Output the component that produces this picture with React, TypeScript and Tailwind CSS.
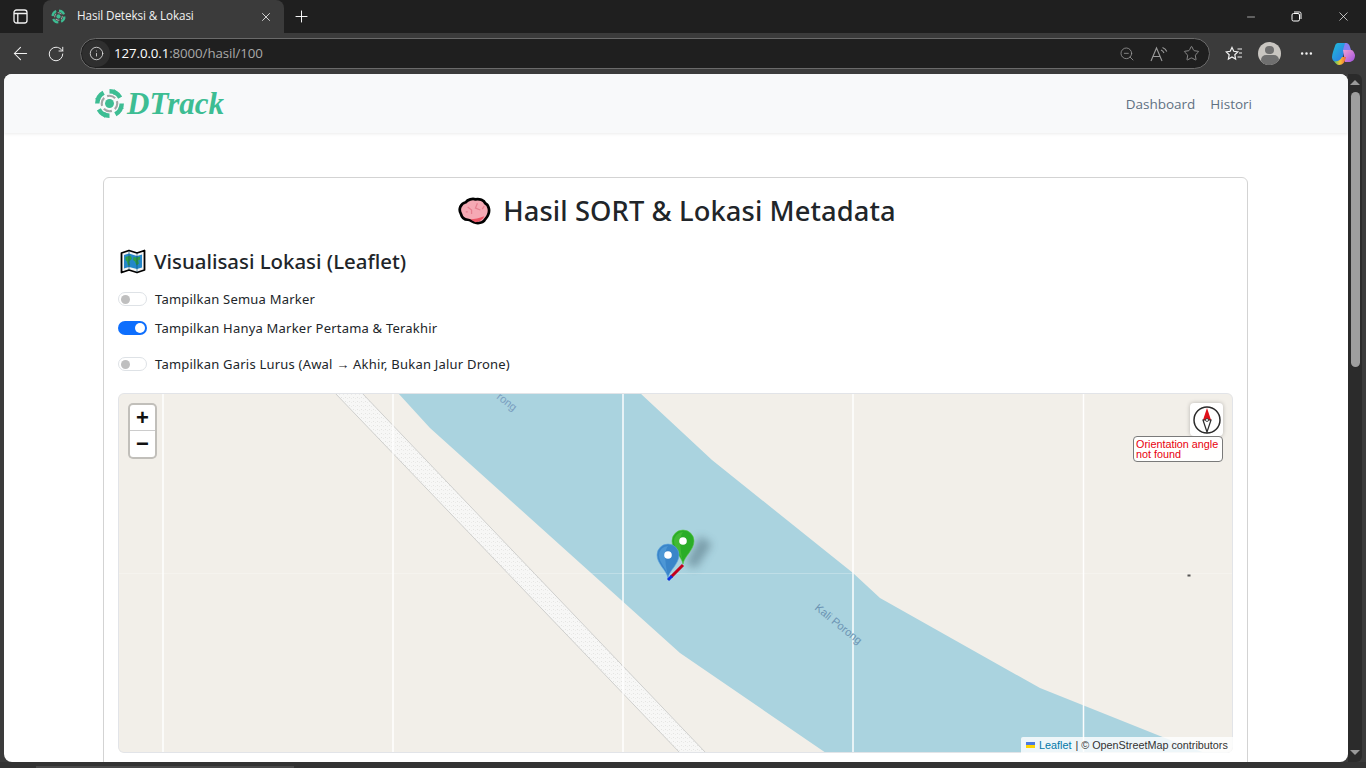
import { ArrowLeft, Info, Minus, MoreHorizontal, Plus, RotateCw, Star, X, ZoomOut } from 'lucide-react'

const LogoMark = ({ size }: { size: number }) => (
  <svg width={size} height={size} viewBox="0 0 32 32" fill="none">
    <circle cx="16" cy="16" r="4.6" fill="#3dbd93" />
    <circle cx="16" cy="16" r="8" stroke="#a3a6a5" strokeWidth="2.2" pathLength={100} strokeDasharray="18 7" strokeDashoffset="5" />
    <circle cx="16" cy="16" r="12.6" stroke="#3dbd93" strokeWidth="4.6" pathLength={100} strokeDasharray="17 8" />
    <path d="M1 11l6-3-1 6zM21 1l5 6-6 0zM31 21l-6 3 1-6zM11 31l-5-6 6 0z" fill="#3dbd93" />
  </svg>
)

const BrainEmoji = () => (
  <svg width="33" height="28" viewBox="0 0 34 28">
    <path d="M3 17C0 12 3 6 8 5c2-3 7-4 10-3 4-1 9 1 10 4 4 2 5 8 3 12-1 3-3 4-4 6-2 2-6 3-9 2-3 0-5-3-8-3-3 0-6-2-7-6z" fill="#f5a9b4" stroke="#000" strokeWidth="2.800" strokeLinejoin="round" />
    <path d="M18 25.500c-2-1-4-2-5-3 4 0 9-1 14-3-1 3-5 6-9 6z" fill="#ea5565" />
    <path d="M10 10l4 3 0 4M20 6l-2 5 5 2M25 12l2-3M8 15l2 0" fill="none" stroke="#e67f8f" strokeWidth="1.300" />
  </svg>
)

const MapEmoji = () => (
  <svg width="26" height="25" viewBox="0 0 26 25">
    <path d="M1.500 4L9 1.500 17 4 24.500 1.500V21L17 23.500 9 21 1.500 23.500z" fill="#f4f4f4" stroke="#000" strokeWidth="1.800" strokeLinejoin="round" />
    <path d="M4 6L9 4.500 17 7 22 5.500V18.500L17 20 9 18 4 19.500z" fill="#2587c9" />
    <path d="M5.500 8l5-1.500 1.500 3-3 3.500 1 3-2 .5-1-4-1.500-1.500zM13.500 8l3 .5 3.500-1v3l-2 1 1 3-2.500 2-1.500-4-2-1.500z" fill="#2f9f47" />
    <path d="M9 2v19M17 4v19" stroke="#0b4a6b" strokeWidth=".6" />
  </svg>
)

const Toggle = ({ on, label, className }: { on?: boolean; label: string; className: string }) => (
  <div className={`flex items-center gap-[8px] ${className}`}>
    {on ? (
      <span className="w-[29px] h-[14px] rounded-full bg-[#0d6efd] flex items-center justify-end pr-[2px]">
        <span className="w-[10px] h-[10px] rounded-full bg-white" />
      </span>
    ) : (
      <span className="w-[29px] h-[14px] rounded-full bg-white border border-[#dee2e6] flex items-center pl-[2px]">
        <span className="w-[9px] h-[9px] rounded-full bg-[#bfbfbf]" />
      </span>
    )}
    <span className="text-[13px] leading-[20px] tracking-[0.21px] text-[#212529]">{label}</span>
  </div>
)

const Pin = ({ x, y, top, bottom }: { x: number; y: number; top: string; bottom: string }) => (
  <g transform={`translate(${x} ${y})`}>
    <path d="M0 0C-1.500-8-11-14-11-23a11 11 0 0 1 22 0C11-14 1.500-8 0 0z" fill={bottom} stroke={top} strokeWidth=".6" />
    <path d="M0-2C-1-9-9-15-9-23a9 9 0 0 1 9-9c-3 3-4 14 0 30z" fill={top} opacity=".55" />
    <circle cx="0" cy="-23" r="3.800" fill="#fff" />
  </g>
)

const MapDrawing = () => (
  <svg className="absolute inset-0" width="1115" height="360" viewBox="118 393 1115 360">
    <defs>
      <filter id="soft" x="-60%" y="-60%" width="220%" height="220%">
        <feGaussianBlur stdDeviation="4" />
      </filter>
      <pattern id="dots" width="4" height="4" patternUnits="userSpaceOnUse">
        <rect width="4" height="4" fill="#f7f7f6" />
        <rect x="1" y="1" width="1" height="1" fill="#e4e4e2" />
        <rect x="3" y="2" width="1" height="1" fill="#ebebe9" />
      </pattern>
    </defs>
    <rect x="118" y="393" width="1115" height="360" fill="#f2efe9" />
    <path d="M398 393L430 428 680 653 826 753H1205L1165 738 1040 688 880 598 853 573 712 460 640 393z" fill="#aad3df" />
    <path d="M335 393H362L706 753H680z" fill="url(#dots)" />
    <path d="M335 393L680 753M362 393L706 753" stroke="#cfcfcd" strokeWidth="1" fill="none" />
    <path d="M163 393V753M393 393V753M623 393V753M853 393V753M1083.500 393V753" stroke="#fff" strokeWidth="1.500" opacity=".95" />
    <path d="M118 573.500H1233" stroke="#fff" strokeWidth="1" opacity=".25" />
    <text x="496" y="398" transform="rotate(38 496 398)" fontSize="11" fill="#7b9fc0" fontFamily="Liberation Sans, sans-serif">rong</text>
    <text x="814" y="609" transform="rotate(39 814 609)" fontSize="11" fill="#6d95b4" fontFamily="Liberation Sans, sans-serif">Kali Porong</text>
    <rect x="1187.500" y="574.500" width="3" height="2" fill="#555" />
    <path d="M686 564L700 536 712 544 696 568z" fill="#2c4452" opacity=".38" filter="url(#soft)" />
    <path d="M683 565L671 577" stroke="#c4001c" strokeWidth="3" />
    <Pin x={683} y={564} top="#56c442" bottom="#2aad27" />
    <Pin x={668} y={578} top="#5da5df" bottom="#3a85c9" />
    <path d="M672 576L668 580" stroke="#0a2fe0" strokeWidth="3" />
  </svg>
)

export default function App() {
  return (
    <div className="w-[1366px] h-[768px] overflow-hidden flex flex-col bg-[#3b3b3b] font-['Noto_Sans','Open_Sans',sans-serif]">
      {/* tab strip */}
      <div className="h-[33px] bg-[#1f1f1f] flex items-end text-white shrink-0">
        <div className="w-[43px] h-[33px] flex items-center pl-[13px]">
          <svg width="15" height="15" viewBox="0 0 15 15" fill="none" stroke="#f2f2f2" strokeWidth="1.300">
            <rect x="1" y="1" width="13" height="13" rx="2.500" />
            <path d="M1 4.500h13M4.800 4.500V14" />
          </svg>
        </div>
        <div className="w-[241px] h-[33px] bg-[#3b3b3b] rounded-t-[8px] flex items-center pl-[8px] pr-[11px] gap-[11px]">
          <LogoMark size={15} />
          <span className="flex-1 text-[11.700px] tracking-[-0.1px] font-['Open_Sans',sans-serif] text-[#f0f0f0] -mt-[1px]">Hasil Deteksi &amp; Lokasi</span>
          <X size={14} strokeWidth={1.500} className="text-[#e8e8e8]" />
        </div>
        <div className="w-[35px] h-[33px] flex items-center justify-center">
          <Plus size={19} strokeWidth={1.200} />
        </div>
        <div className="flex-1" />
        <div className="h-[33px] flex items-center pr-[15px] gap-[34px]">
          <Minus size={12} strokeWidth={1.200} />
          <svg width="11" height="11" viewBox="0 0 11 11" fill="none" stroke="#fff" strokeWidth="1">
            <rect x="1" y="2.500" width="7.500" height="7.500" rx="1.500" />
            <path d="M3 1h5.500a1.500 1.500 0 0 1 1.500 1.500V8" />
          </svg>
          <X size={15} strokeWidth={1.100} />
        </div>
      </div>

      {/* toolbar */}
      <div className="h-[41px] flex items-center shrink-0 text-[#f2f2f2]">
        <div className="w-[40px] flex justify-center">
          <ArrowLeft size={21} strokeWidth={1.200} />
        </div>
        <div className="w-[40px] flex justify-center -ml-[4px]">
          <RotateCw size={18} strokeWidth={1.300} />
        </div>
        <div className="w-[1130px] h-[31px] ml-[4px] rounded-full bg-[#1f1f1f] border border-[#6a6a6a] flex items-center pl-[1px] pr-[9px]">
          <span className="w-[28px] h-[27px] rounded-full bg-[#2f2f2f] flex items-center justify-center">
            <Info size={15} strokeWidth={1.300} className="text-[#e5e5e5]" />
          </span>
          <span className="ml-[4px] mt-[1px] flex-1 text-[13.300px] tracking-[-0.1px] font-['Open_Sans',sans-serif] text-[#a9a9a9]">
            <span className="text-white">127.0.0.1</span>:8000/hasil/100
          </span>
          <div className="flex items-center gap-[15px] text-[#9a9a9a]">
            <ZoomOut size={16} strokeWidth={1.200} />
            <svg width="18" height="16" viewBox="0 0 18 16" fill="none" stroke="#9a9a9a" strokeWidth="1.100">
              <path d="M1 15L6.500 2 12 15M3 10.500h7M11 4c1.500.5 2.300 1.300 3 3M12.500 1.500c2 .7 3.500 2 4.300 4" />
            </svg>
            <Star size={17} strokeWidth={1.200} />
          </div>
        </div>
        <div className="flex items-center">
          <svg className="ml-[15px]" width="18" height="16" viewBox="0 0 18 16" fill="none" stroke="#f2f2f2" strokeWidth="1.200">
            <path d="M7 1.500l1.800 3.800 4 .6-3 2.800.8 4.300L7 11l-3.600 2 .8-4.300-3-2.800 4-.6zM12.500 3H17M14 7h3M12.500 11H17" />
          </svg>
          <span className="ml-[15px] w-[23px] h-[23px] rounded-full bg-[#c9c6c1] overflow-hidden flex flex-col items-center">
            <span className="mt-[4px] w-[9px] h-[9px] rounded-full bg-[#6f6f6f]" />
            <span className="mt-[1px] w-[18px] h-[12px] rounded-full bg-[#6f6f6f]" />
          </span>
          <MoreHorizontal size={15} strokeWidth={2} className="ml-[18px]" />
          <svg className="ml-[17px]" width="24" height="24" viewBox="0 0 24 24">
            <defs>
              <linearGradient id="cpA" x1="0" y1="0" x2="1" y2="1">
                <stop offset="0" stopColor="#1fc0d8" />
                <stop offset="1" stopColor="#2f6be8" />
              </linearGradient>
              <linearGradient id="cpB" x1="0" y1="0" x2="1" y2="1">
                <stop offset="0" stopColor="#f2a0d0" />
                <stop offset="1" stopColor="#a04fe0" />
              </linearGradient>
              <linearGradient id="cpC" x1="0" y1="0" x2="1" y2="0">
                <stop offset="0" stopColor="#45c46c" />
                <stop offset=".5" stopColor="#f5c533" />
                <stop offset="1" stopColor="#f0603c" />
              </linearGradient>
            </defs>
            <path d="M8 1h8l-4 13c-1 4-3 6-6 6-3 0-5-2-5-5 0-3 2-8 3-11s2-3 4-3z" fill="url(#cpA)" />
            <path d="M12 8h8c2 0 3 2 4 5 0 5-3 7-6 7h-4z" fill="url(#cpB)" />
            <path d="M3 19c3 1 6 0 8-4h4c-1 5-3 8-7 8-2 0-4-2-5-4z" fill="url(#cpC)" />
            <path d="M14 1h1c2 0 3 1 4 4l1 3h-8z" fill="#8a7cf0" />
          </svg>
        </div>
      </div>

      {/* page + scrollbar */}
      <div className="h-[688px] flex pl-[4px] shrink-0">
        <div className="w-[1344px] h-[688px] bg-white rounded-t-[8px] rounded-b-[8px] overflow-hidden">
          <nav className="h-[59px] bg-[#f8f9fa] shadow-[0_1px_3px_rgba(0,0,0,0.08)] flex items-center pl-[90px] pr-[96px]">
            <LogoMark size={31} />
            <span className="ml-[2px] mt-[2px] font-['Liberation_Serif',serif] font-bold italic text-[31px] text-[#3dbd93]">DTrack</span>
            <div className="flex-1" />
            <div className="flex gap-[15px] mt-[1px] text-[13.500px] text-[#5f7182] font-['Open_Sans',sans-serif]">
              <span>Dashboard</span>
              <span>Histori</span>
            </div>
          </nav>
          <div className="mt-[44px] mx-[99px] w-[1145px] h-[640px] border border-[#d3d3d3] rounded-[6px] px-[14px]">
            <div className="h-[66px] flex items-center justify-center gap-[12px] pl-[3px]">
              <BrainEmoji />
              <h1 className="text-[27.300px] font-medium text-[#212529] tracking-[0.1px]">Hasil SORT &amp; Lokasi Metadata</h1>
            </div>
            <div className="h-[34px] flex items-center gap-[8px] pl-[2px]">
              <MapEmoji />
              <h2 className="text-[20.400px] font-medium text-[#212529]">Visualisasi Lokasi (Leaflet)</h2>
            </div>
            <Toggle label="Tampilkan Semua Marker" className="mt-[11px]" />
            <Toggle on label="Tampilkan Hanya Marker Pertama & Terakhir" className="mt-[9px]" />
            <Toggle label="Tampilkan Garis Lurus (Awal → Akhir, Bukan Jalur Drone)" className="mt-[16px]" />
            <div className="relative mt-[19px] w-[1115px] h-[360px] rounded-[6px] overflow-hidden">
              <MapDrawing />
              <div className="absolute inset-0 rounded-[6px] border border-[#e2e4e8]" />
              <div className="absolute left-[10px] top-[10px] w-[29px] h-[56px] bg-white bg-clip-padding rounded-[5px] border-2 border-black/20 flex flex-col font-['Liberation_Sans',sans-serif] font-bold text-[#111] text-[22px] leading-[26px] text-center">
                <span className="h-[26px] border-b border-[#ccc]">+</span>
                <span className="h-[26px]">−</span>
              </div>
              <div className="absolute right-[10px] top-[10px] w-[33px] h-[33px] bg-white rounded-[4px] shadow-[0_0_4px_rgba(0,0,0,0.25)] flex items-center justify-center">
                <svg width="30" height="30" viewBox="0 0 30 30">
                  <circle cx="15" cy="15" r="13" fill="#fff" stroke="#2b2b2b" strokeWidth="1.500" />
                  <path d="M15 3l4 12h-8z" fill="#e0101a" />
                  <path d="M15 27l4-12h-8z" fill="#fff" stroke="#2b2b2b" strokeWidth="1.200" />
                  <circle cx="15" cy="15" r="1.500" fill="#fff" stroke="#2b2b2b" strokeWidth=".8" />
                </svg>
              </div>
              <div className="absolute left-[1015px] top-[43px] w-[90px] h-[26px] bg-white/95 rounded-[4px] border border-[#7a7a7a] pl-[2px] pt-[2px] font-['Liberation_Sans',sans-serif] text-[10.800px] leading-[10px] text-[#e8000d]">
                Orientation angle not found
              </div>
              <div className="absolute right-0 bottom-0 h-[16px] w-[212px] bg-white/80 rounded-tl-[2px] pl-[5px] flex items-center gap-[4px] font-['Liberation_Sans',sans-serif] text-[10.800px] text-[#333]">
                <span className="w-[9px] h-[6px] flex flex-col">
                  <span className="h-[3px] bg-[#4c7be1]" />
                  <span className="h-[3px] bg-[#ffd500]" />
                </span>
                <span className="text-[#0078a8]">Leaflet</span>
                <span>| © OpenStreetMap contributors</span>
              </div>
            </div>
          </div>
        </div>
        {/* scrollbar */}
        <div className="w-[14px] h-[688px] flex flex-col items-center bg-[#2b2b2b] rounded-r-[6px]">
          <span className="mt-[6px] w-0 h-0 border-x-[5px] border-x-transparent border-b-[5px] border-b-[#9a9a9a]" />
          <span className="mt-[7px] w-[9px] h-[275px] rounded-full bg-[#9e9e9e]" />
          <span className="mt-[383px] w-0 h-0 border-x-[5px] border-x-transparent border-t-[5px] border-t-[#9a9a9a]" />
        </div>
      </div>

      {/* strip under the window */}
      <div className="h-[6px] bg-[#333333] flex items-end shrink-0">
        <span className="ml-[36px] w-[258px] h-[2px] bg-[#4a4a4a]" />
      </div>
    </div>
  )
}
